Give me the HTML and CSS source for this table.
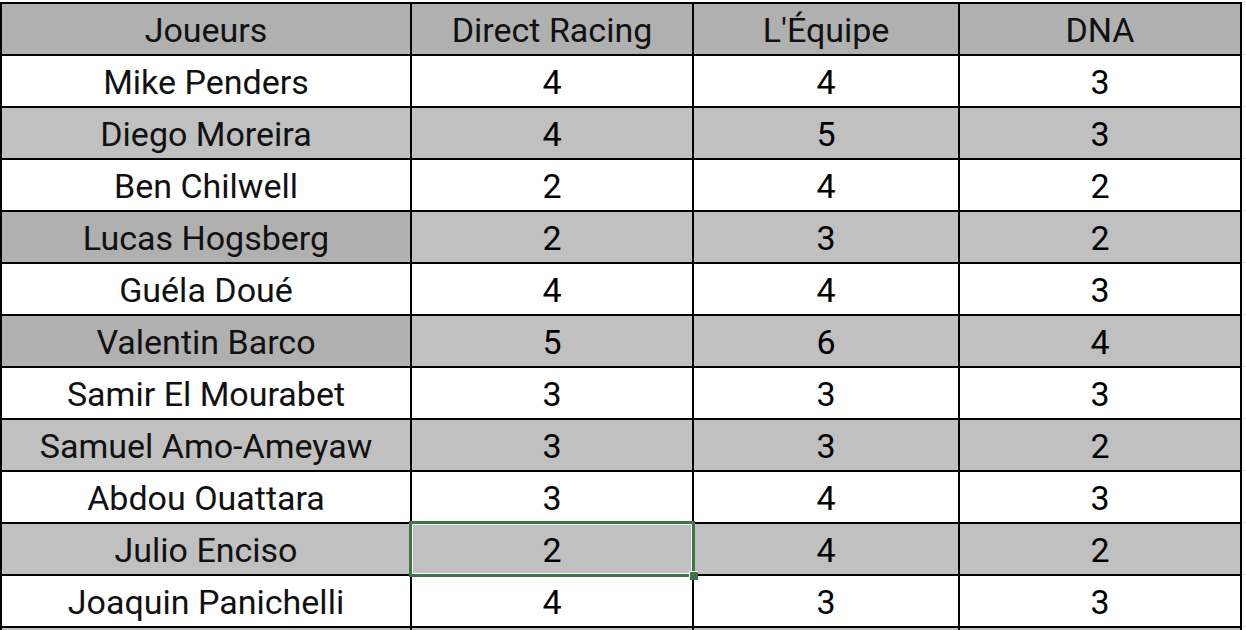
FILE: index.html
```html
<!DOCTYPE html>
<html lang="fr">
<head>
<meta charset="utf-8">
<title>Notes des joueurs</title>
<link rel="stylesheet" href="styles.css">
</head>
<body>
<div class="page">
  <div class="sheet">
    <div class="cell head">Joueurs</div>
    <div class="cell head">Direct Racing</div>
    <div class="cell head">L'Équipe</div>
    <div class="cell head">DNA</div>

    <div class="cell name">Mike Penders</div><div class="cell num">4</div><div class="cell num">4</div><div class="cell num">3</div>
    <div class="cell name alt">Diego Moreira</div><div class="cell num alt">4</div><div class="cell num alt">5</div><div class="cell num alt">3</div>
    <div class="cell name">Ben Chilwell</div><div class="cell num">2</div><div class="cell num">4</div><div class="cell num">2</div>
    <div class="cell name dark">Lucas Hogsberg</div><div class="cell num alt">2</div><div class="cell num alt">3</div><div class="cell num alt">2</div>
    <div class="cell name">Guéla Doué</div><div class="cell num">4</div><div class="cell num">4</div><div class="cell num">3</div>
    <div class="cell name dark">Valentin Barco</div><div class="cell num alt">5</div><div class="cell num alt">6</div><div class="cell num alt">4</div>
    <div class="cell name">Samir El Mourabet</div><div class="cell num">3</div><div class="cell num">3</div><div class="cell num">3</div>
    <div class="cell name alt">Samuel Amo-Ameyaw</div><div class="cell num alt">3</div><div class="cell num alt">3</div><div class="cell num alt">2</div>
    <div class="cell name">Abdou Ouattara</div><div class="cell num">3</div><div class="cell num">4</div><div class="cell num">3</div>
    <div class="cell name alt">Julio Enciso</div><div class="cell num alt selected">2</div><div class="cell num alt">4</div><div class="cell num alt">2</div>
    <div class="cell name">Joaquin Panichelli</div><div class="cell num">4</div><div class="cell num">3</div><div class="cell num">3</div>
  </div>
  <div class="sheet next">
    <div class="cell alt"></div><div class="cell alt"></div><div class="cell alt"></div><div class="cell alt"></div>
  </div>
</div>
</body>
</html>
```

FILE: styles.css
```css
html, body {
  margin: 0;
  padding: 0;
  background: #ffffff;
}

.page {
  padding-top: 2px;
  height: 628px;
  overflow: hidden;
  background-image: repeating-linear-gradient(to bottom, #e2e2e2 0, #e2e2e2 1px, transparent 1px, transparent 52px);
  background-position: 0 2px;
}

.sheet {
  display: grid;
  grid-template-columns: 408px 280px 264px 280px;
  grid-auto-rows: 50px;
  gap: 2px;
  padding: 2px;
  background: #000000;
  width: max-content;
}

.sheet.next {
  padding-top: 0;
}

.cell {
  background: #ffffff;
  display: flex;
  align-items: center;
  justify-content: center;
  font-family: Roboto, "Liberation Sans", sans-serif;
  font-size: 34px;
  color: #111111;
  line-height: 1;
  padding-top: 1px;
  box-sizing: border-box;
}

.head {
  background: #b0b0b0;
}

.alt {
  background: #c0c0c0;
}

.dark {
  background: #b0b0b0;
}

.num {
  color: #000000;
}

.selected {
  position: relative;
}

.selected::before {
  content: "";
  position: absolute;
  left: -3px;
  top: -3px;
  right: -3px;
  bottom: -3px;
  border: 3px solid #3d7547;
  box-shadow: inset 0 0 0 1px #ffffff;
}

.selected::after {
  content: "";
  position: absolute;
  right: -6px;
  bottom: -6px;
  width: 8px;
  height: 8px;
  background: #3d7547;
  border-top: 1px solid #ffffff;
  border-left: 1px solid #ffffff;
}
```
